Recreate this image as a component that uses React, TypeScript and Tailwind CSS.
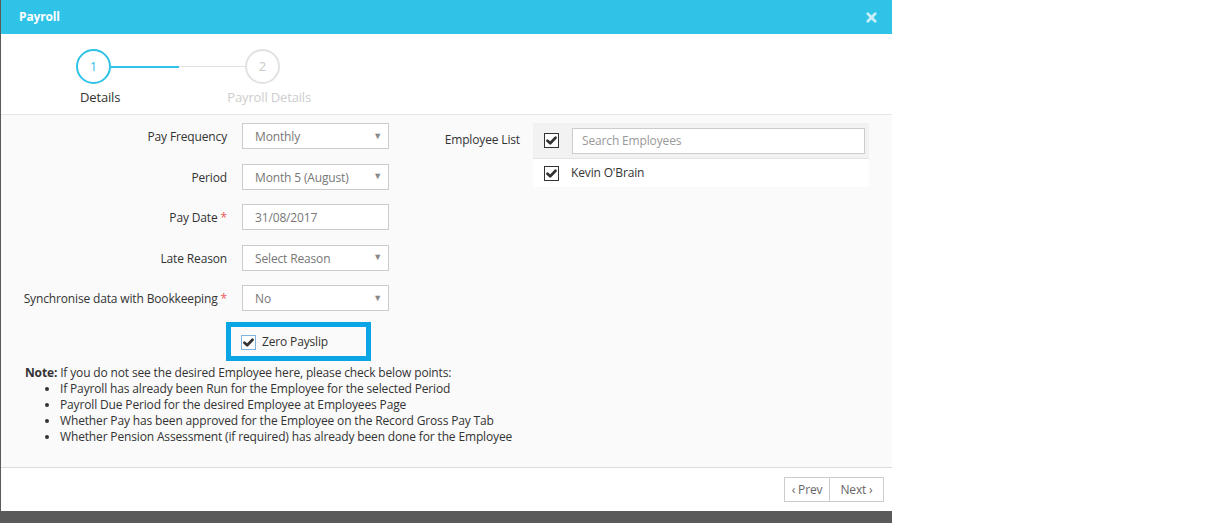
import React from 'react'

const font = { fontFamily: '"Open Sans", "Noto Sans", sans-serif' }

function Check({ focus = false }: { focus?: boolean }) {
  return (
    <span
      className={
        'flex h-[15px] w-[15px] shrink-0 items-center justify-center bg-white border ' +
        (focus ? 'border-[#7fb3e0]' : 'border-[#333]')
      }
    >
      <svg viewBox="0 0 12 12" className="h-[11px] w-[11px]">
        <path d="M1.6 6.2 L4.6 9 L10.4 3" fill="none" stroke="#333" strokeWidth="2.9" strokeLinecap="round" strokeLinejoin="round" />
      </svg>
    </span>
  )
}

function Select({ value }: { value: string }) {
  return (
    <div className="flex h-[26px] w-[147px] items-center justify-between border border-[#ccc] bg-white pl-[12px] pr-[6px] pt-[2px] text-[12px] text-[#777]">
      <span>{value}</span>
      <span className="pb-[3px] text-[9px] text-[#888]">▼</span>
    </div>
  )
}

function Field({ label, required, children }: { label: string; required?: boolean; children: React.ReactNode }) {
  return (
    <div className="flex h-[26px] items-center">
      <div className="flex w-[227px] justify-end pr-[1px] pt-[2px] text-[12px] text-[#333]">
        {label}
        {required && <span className="ml-[3px] text-[#e55]">*</span>}
      </div>
      <div className="ml-[14px]">{children}</div>
    </div>
  )
}

const notes = [
  'If Payroll has already been Run for the Employee for the selected Period',
  'Payroll Due Period for the desired Employee at Employees Page',
  'Whether Pay has been approved for the Employee on the Record Gross Pay Tab',
  'Whether Pension Assessment (if required) has already been done for the Employee',
]

export default function App() {
  return (
    <div className="flex h-[523px] w-[1232px] overflow-hidden bg-white tracking-[-0.15px]" style={font}>
      <div className="flex w-[892px] flex-col">
        <div className="flex flex-1 flex-col border-l border-[#5a5a5a]">
          {/* Header */}
          <div className="flex h-[34px] items-center justify-between bg-[#2fc3e7] pl-[18px] pr-[15px]">
            <span className="text-[12px] font-bold text-white">Payroll</span>
            <svg viewBox="0 0 12 12" className="h-[11px] w-[11px]">
              <path d="M2 2 L10 10 M10 2 L2 10" stroke="#c9eff9" strokeWidth="3" strokeLinecap="round" />
            </svg>
          </div>

          {/* Stepper */}
          <div className="h-[81px] border-b border-[#e6e6e6] bg-white">
            <div className="ml-[75px] mt-[15px] flex items-center">
              <div className="flex h-[35px] w-[35px] items-center justify-center rounded-full border-2 border-[#2fc3e7] text-[13px] text-[#2fc3e7]">1</div>
              <div className="h-[2px] w-[68px] bg-[#2fc3e7]" />
              <div className="h-[1px] w-[66px] bg-[#e2e2e2]" />
              <div className="flex h-[35px] w-[35px] items-center justify-center rounded-full border-2 border-[#e2e2e2] text-[13px] text-[#c8c8c8]">2</div>
            </div>
            <div className="mt-[4px] flex text-[13px] leading-[18px]">
              <span className="ml-[79px] text-[#333]">Details</span>
              <span className="ml-[107px] text-[#cdcdcd]">Payroll Details</span>
            </div>
          </div>

          {/* Body */}
          <div className="flex-1 border-b border-[#dcdcdc] bg-[#fafafa]">
            <div className="flex pt-[8px]">
              <div className="flex flex-col gap-[14.5px]">
                <Field label="Pay Frequency"><Select value="Monthly" /></Field>
                <Field label="Period"><Select value="Month 5 (August)" /></Field>
                <Field label="Pay Date" required>
                  <div className="flex h-[26px] w-[147px] items-center border border-[#ccc] bg-white pl-[12px] pt-[2px] text-[12px] text-[#777]">31/08/2017</div>
                </Field>
                <Field label="Late Reason"><Select value="Select Reason" /></Field>
                <Field label="Synchronise data with Bookkeeping" required><Select value="No" /></Field>
              </div>

              <div className="flex">
                <div className="flex w-[144px] justify-end pr-[13px] pt-[8px] text-[12px] text-[#333]">Employee List</div>
                <div className="w-[336px]">
                  <div className="flex h-[36px] items-center border-b border-[#e2e2e2] bg-[#f2f2f2] pl-[11px] pr-[4px]">
                    <Check />
                    <div className="ml-[13px] flex h-[26px] flex-1 items-center border border-[#ccc] bg-white pl-[9px] pt-[1px] text-[12px] text-[#999]">Search Employees</div>
                  </div>
                  <div className="flex h-[28px] items-center bg-white pl-[11px] text-[12px] text-[#333]">
                    <Check />
                    <span className="ml-[12px]">Kevin O'Brain</span>
                  </div>
                </div>
              </div>
            </div>

            <div className="ml-[225px] mt-[11px] flex h-[39px] w-[145px] items-center border-[5px] border-[#0ba5e6] pl-[10px] pt-[1px]">
              <Check focus />
              <span className="ml-[6px] text-[12px] text-[#333]">Zero Payslip</span>
            </div>

            <div className="ml-[24px] mt-[4px] text-[12px] leading-[16px] text-[#333]">
              <div><span className="font-bold">Note:</span> If you do not see the desired Employee here, please check below points:</div>
              <ul className="ml-[35px] list-disc">
                {notes.map((n) => (
                  <li key={n}>{n}</li>
                ))}
              </ul>
            </div>
          </div>

          {/* Footer */}
          <div className="flex h-[43px] justify-end bg-white pr-[8px] pt-[9px]">
            <div className="flex h-[25px] border border-[#ccc] text-[12px] text-[#666]">
              <span className="flex w-[45px] items-center justify-center border-r border-[#ccc]">‹ Prev</span>
              <span className="flex w-[53px] items-center justify-center">Next ›</span>
            </div>
          </div>
        </div>
        <div className="h-[12px] bg-[#5a5a5a]" />
      </div>
      <div className="flex-1 bg-white" />
    </div>
  )
}
